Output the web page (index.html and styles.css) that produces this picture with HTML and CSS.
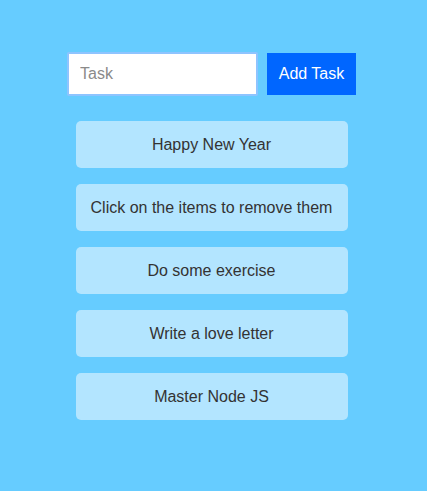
FILE: index.html
```html
<!DOCTYPE html>
<html>
<head>
<meta charset="utf-8">
<link rel="stylesheet" href="styles.css">
</head>
<body>
<div class="app">
  <form class="add-form">
    <input class="task-input" type="text" placeholder="Task">
    <button class="add-btn" type="button">Add Task</button>
  </form>
  <ul class="task-list">
    <li class="task">Happy New Year</li>
    <li class="task">Click on the items to remove them</li>
    <li class="task">Do some exercise</li>
    <li class="task">Write a love letter</li>
    <li class="task">Master Node JS</li>
  </ul>
</div>
</body>
</html>
```

FILE: styles.css
```css
html, body {
  margin: 0;
  padding: 0;
}
body {
  background: #66ccff;
  font-family: "Liberation Sans", Arial, sans-serif;
  font-size: 16px;
  color: #333333;
  height: 491px;
}
.app {
  display: flex;
  flex-direction: column;
  align-items: center;
  padding-top: 52px;
}
.add-form {
  display: flex;
  align-items: center;
  gap: 9px;
  margin: 0 0 0 -4px;
}
.task-input {
  box-sizing: border-box;
  width: 191px;
  height: 44px;
  border: 2px solid #8ec4ff;
  border-radius: 2px;
  padding: 0 11px;
  font-family: "Liberation Sans", Arial, sans-serif;
  font-size: 16px;
  color: #333;
  background: #ffffff;
  outline: none;
}
.task-input::placeholder {
  color: #8a8a8a;
}
.add-btn {
  box-sizing: border-box;
  width: 89px;
  height: 42px;
  border: none;
  background: #0066ff;
  color: #ffffff;
  font-family: "Liberation Sans", Arial, sans-serif;
  font-size: 16px;
  padding: 0;
}
.task-list {
  list-style: none;
  margin: 25px 0 0 -4px;
  padding: 0;
  display: flex;
  flex-direction: column;
  gap: 16px;
}
.task {
  box-sizing: border-box;
  width: 272px;
  height: 47px;
  background: #b3e5ff;
  border-radius: 5px;
  display: flex;
  align-items: center;
  justify-content: center;
  color: #333333;
}
```
